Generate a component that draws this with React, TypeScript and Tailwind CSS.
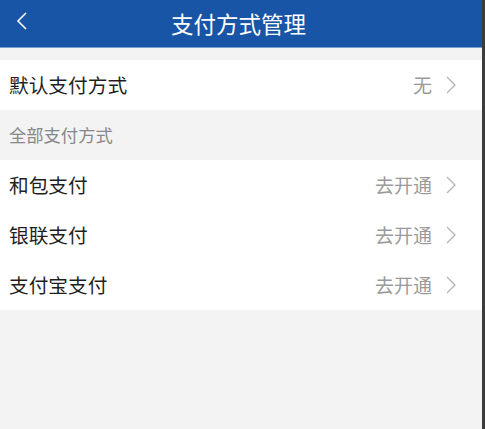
import React from "react";

const Chevron = () => (
  <svg width="12" height="20" viewBox="0 0 12 20" className="ml-[13px]">
    <polyline points="2,2 10,10 2,18" fill="none" stroke="#b5b5b5" strokeWidth="1.3" />
  </svg>
);

const Row = ({ label, value }: { label: string; value: string }) => (
  <div className="flex h-[50px] items-center justify-between bg-white pl-[9px] pr-[25px]">
    <span className="text-[19.7px] text-[#1f1f1f]">{label}</span>
    <div className="flex items-center">
      <span className="text-[19px] text-[#9a9a9a]">{value}</span>
      <Chevron />
    </div>
  </div>
);

export default function App() {
  return (
    <div
      className="flex h-[429px] w-[485px] overflow-hidden"
      style={{ fontFamily: '"Noto Sans CJK SC", "Noto Sans", sans-serif' }}
    >
      <div className="flex flex-1 flex-col bg-[#f3f3f3]">
        <div className="relative flex h-[47px] items-center justify-center bg-[#1855a6]">
          <svg width="14" height="20" viewBox="0 0 14 20" className="absolute left-[15px] top-[11px]">
            <polyline points="11,2 3,10 11,18" fill="none" stroke="#fff" strokeWidth="1.6" />
          </svg>
          <span className="mr-[5px] text-[22.5px] text-white">支付方式管理</span>
        </div>
        <div className="h-px bg-[#7a9bd0]" />
        <div className="h-[12px] bg-[#f3f3f3]" />
        <Row label="默认支付方式" value="无" />
        <div className="flex h-[50px] items-center pl-[9px]">
          <span className="text-[17.3px] text-[#888]">全部支付方式</span>
        </div>
        <Row label="和包支付" value="去开通" />
        <Row label="银联支付" value="去开通" />
        <Row label="支付宝支付" value="去开通" />
        <div className="flex-1 bg-[#f3f3f3]" />
      </div>
      <div className="w-[3px] bg-[#3c3c3c]" />
    </div>
  );
}
